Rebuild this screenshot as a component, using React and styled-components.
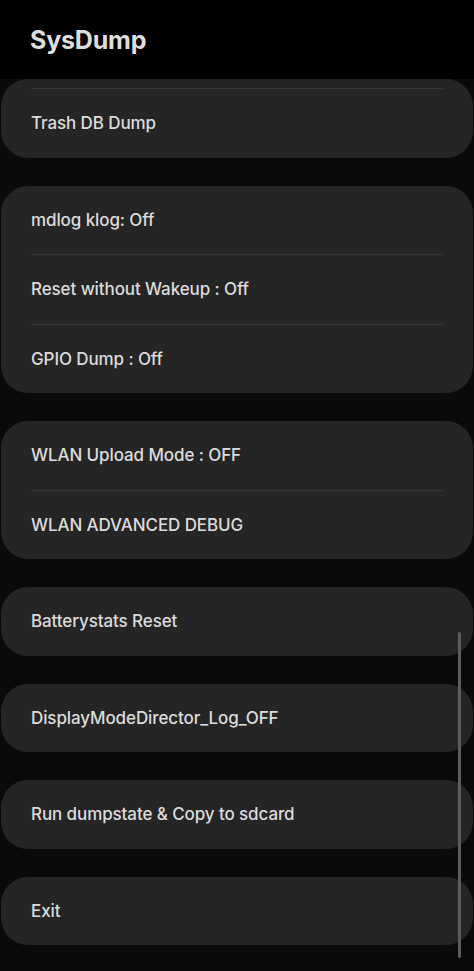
import React from 'react'
import styled, { createGlobalStyle } from 'styled-components'

const groups = [
  { cut: true, items: ['Trash DB Dump'] },
  { items: ['mdlog klog: Off', 'Reset without Wakeup : Off', 'GPIO Dump : Off'] },
  { items: ['WLAN Upload Mode : OFF', 'WLAN ADVANCED DEBUG'] },
  { items: ['Batterystats Reset'] },
  { items: ['DisplayModeDirector_Log_OFF'] },
  { items: ['Run dumpstate & Copy to sdcard'] },
  { items: ['Exit'] },
]

const App = () => {
  return (
    <Page>
      <GlobalStyle />
      <Header>
        <Title>SysDump</Title>
      </Header>
      <List>
        {groups.map((group, i) => (
          <Card key={i}>
            {group.cut && <CutTop />}
            {group.cut && <Divider />}
            {group.items.map((label, j) => (
              <React.Fragment key={label}>
                {j > 0 && <Divider />}
                <Row>{label}</Row>
              </React.Fragment>
            ))}
          </Card>
        ))}
      </List>
      <ScrollThumb />
    </Page>
  )
}

export default App

const GlobalStyle = createGlobalStyle`
  html, body {
    margin: 0;
    padding: 0;
    background: #0a0a0a;
  }
`

const Page = styled.div`
  position: relative;
  min-height: 971px;
  background: #0a0a0a;
  font-family: Inter, Roboto, "Noto Sans", sans-serif;
  overflow: hidden;
`

const Header = styled.div`
  height: 79px;
  background: #000;
  display: flex;
  align-items: center;
  padding: 0 30px;
  box-sizing: border-box;
`

const Title = styled.h1`
  margin: 0;
  font-size: 25px;
  font-weight: 700;
  color: #dedede;
  letter-spacing: -0.2px;
`

const List = styled.div`
  display: flex;
  flex-direction: column;
  gap: 28px;
`

const Card = styled.div`
  background: #252525;
  border-radius: 27px;
  margin: 0 1px;
  overflow: hidden;
`

const CutTop = styled.div`
  height: 9px;
`

const Divider = styled.div`
  height: 1px;
  margin: 0 30px;
  background: #363636;
`

const Row = styled.div`
  height: 68.5px;
  display: flex;
  align-items: center;
  padding: 0 30px;
  font-size: 17px;
  font-weight: 500;
  color: #dcdcdc;
  letter-spacing: -0.1px;
`

const ScrollThumb = styled.div`
  position: absolute;
  left: 458px;
  top: 632px;
  width: 3px;
  height: 326px;
  border-radius: 2px;
  background: #5c5c5c;
`
